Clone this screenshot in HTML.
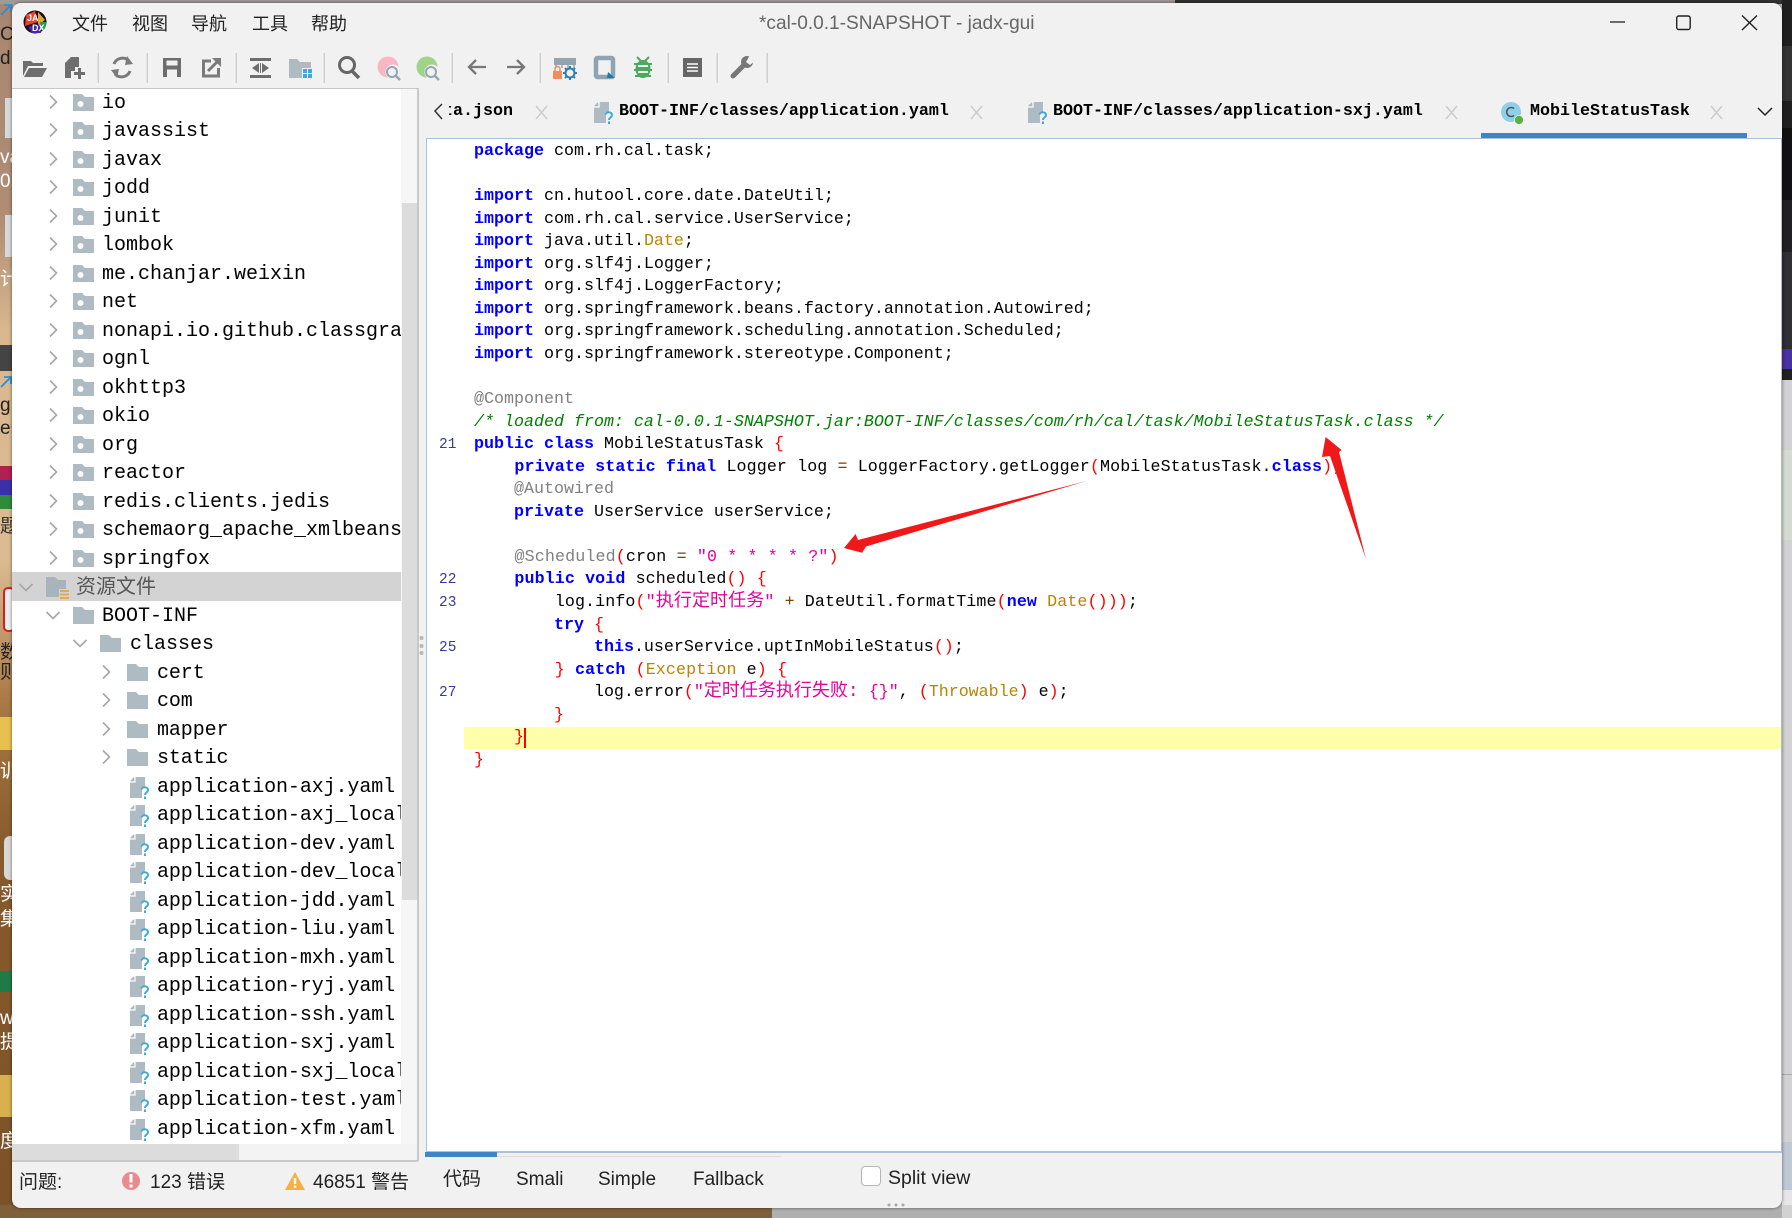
<!DOCTYPE html>
<html><head><meta charset="utf-8"><style>
*{box-sizing:border-box}
html,body{margin:0;padding:0;width:1792px;height:1218px;overflow:hidden;background:#b5b5b5}
.a{position:absolute}
#win{position:absolute;left:12px;top:3px;width:1770px;height:1205px;background:#f1f1f1;border-radius:9px;box-shadow:0 0 3px rgba(0,0,0,.55)}
.ui{font-family:"Liberation Sans","Noto Sans CJK SC",sans-serif;white-space:pre}
.m{position:absolute;top:12px;font:18px/24px "Liberation Sans","Noto Sans CJK SC",sans-serif;color:#222}
#tree{position:absolute;left:12px;top:89px;width:389px;height:1055px;background:#fff;overflow:hidden;font:20px/28.5px "Liberation Mono","Noto Sans CJK SC",monospace;color:#000}
#tree .r{position:absolute;left:0;width:389px;height:28.5px;white-space:pre}
#tree svg{position:absolute}
#tree .r>span{top:2px}
#tree span[style*="145px"]{letter-spacing:-.1px}
.tab{position:absolute;top:101px;font:bold 16.67px/22px "Liberation Mono",monospace;color:#000;white-space:pre}
#code{position:absolute;left:427px;top:139px;width:1354px;height:1012px;background:#fff;overflow:hidden;font:16.67px/22.55px "Liberation Mono","Noto Sans CJK SC",monospace;color:#000}
#code .l{position:absolute;left:47px;height:22.55px;white-space:pre;margin-top:2px}
#code .n{position:absolute;left:12px;color:#3a3a9c;font-size:14.5px;line-height:22.55px;margin-top:2px}
.w{letter-spacing:.1px}
b{color:#0000ff;font-weight:bold}
.p{color:#ff0000}.t{color:#bb8400}.s{color:#e8009c}.an{color:#808080}.o{color:#804000}
.c{color:#007f00;font-style:italic}
.z{font-size:18px;line-height:0}
.st{position:absolute;font:19px/24px "Liberation Sans","Noto Sans CJK SC",sans-serif;color:#222;white-space:pre}
.d{position:absolute;left:0;width:12px;overflow:hidden;font:19px/24px "Liberation Sans","Noto Sans CJK SC",sans-serif;white-space:pre}
</style></head><body>
<svg width="0" height="0" style="position:absolute"><defs>
<symbol id="cr" viewBox="0 0 10 16"><path d="M2 1.5 L8.5 8 L2 14.5" fill="none" stroke="#a6a6a6" stroke-width="1.6"/></symbol>
<symbol id="cd" viewBox="0 0 16 10"><path d="M1.5 2 L8 8.5 L14.5 2" fill="none" stroke="#a6a6a6" stroke-width="1.6"/></symbol>
<symbol id="pk" viewBox="0 0 21 17"><path d="M0 0H9L12 3H21V17H0Z" fill="#aebbc2"/><circle cx="7.5" cy="10" r="3" fill="#fff"/></symbol>
<symbol id="fo" viewBox="0 0 21 17"><path d="M0 0H9L12 3H21V17H0Z" fill="#aebbc2"/></symbol>
<symbol id="fi" viewBox="0 0 20 24"><path d="M5 0H15V11H12V21H0V5Z M0 4L4 0V4Z" fill="#aebbc2"/><path d="M5 0V5H0" fill="none" stroke="#fff" stroke-width="1.2"/><path d="M11.5 12.5C12 9.5 18 9.5 18 13C18 15.5 15 15.5 15 18" fill="none" stroke="#3fa9dd" stroke-width="2"/><rect x="14" y="19.5" width="2" height="2.5" fill="#3fa9dd"/></symbol>
</defs></svg>

<!-- desktop -->
<div class="a" style="left:0;top:0;width:13px;height:1218px;background:linear-gradient(#a88670 0,#b08d74 220px,#d9b78f 330px,#dcbb92 560px,#a97a45 700px,#875a2c 850px,#7b5228 1218px)"></div>
<div class="a" style="left:0;top:0;width:1175px;height:4px;background:#9f9a98"></div>
<div class="a" style="left:1175px;top:0;width:617px;height:4px;background:#333"></div>
<div class="a" style="left:0;top:1205px;width:772px;height:13px;background:#80603a"></div>
<div class="a" style="left:772px;top:1205px;width:1020px;height:13px;background:#b0b0b0"></div>
<div class="a" style="left:1782px;top:0;width:10px;height:380px;background:#202020"></div>
<div class="a" style="left:1782px;top:46px;width:10px;height:55px;background:#333"></div>
<div class="a" style="left:1782px;top:128px;width:10px;height:72px;background:#111"></div>
<div class="a" style="left:1782px;top:252px;width:10px;height:98px;background:#2e2e33"></div>
<div class="a" style="left:1782px;top:349px;width:10px;height:20px;background:#4a2fa0"></div>
<div class="a" style="left:1782px;top:380px;width:10px;height:838px;background:#d2d2d2"></div>
<div class="a" style="left:1782px;top:450px;width:10px;height:90px;background:#d5dbd3"></div>
<div class="a" style="left:1782px;top:1074px;width:10px;height:1px;background:#aaa"></div>
<div class="a" style="left:1782px;top:1142px;width:10px;height:48px;background:#c0c8d6"></div>
<div class="a" style="left:1782px;top:1190px;width:10px;height:15px;background:#e6e6e6"></div>

<svg class="a" style="left:0;top:0" width="13" height="400" viewBox="0 0 13 400"><path d="M1 15L10 6M4 5H11V12" fill="none" stroke="#2a8fd8" stroke-width="1.8"/><path d="M1 387L10 378M4 377H11V384" fill="none" stroke="#2a8fd8" stroke-width="1.8"/></svg>
<div class="d" style="top:23px;color:#222">Ch</div>
<div class="d" style="top:47px;color:#222">d</div>
<div class="a" style="left:5px;top:98px;width:7px;height:40px;background:#d5d9dc"></div>
<div class="d" style="top:146px;color:#fff">va</div>
<div class="d" style="top:170px;color:#fff">0</div>
<div class="a" style="left:5px;top:215px;width:7px;height:42px;background:#d5d9dc"></div>
<div class="d" style="top:268px;color:#fff">计</div>
<div class="a" style="left:0;top:345px;width:12px;height:26px;background:#444"></div>
<div class="d" style="top:394px;color:#222">g</div>
<div class="d" style="top:417px;color:#222">er</div>
<div class="a" style="left:0;top:466px;width:12px;height:14px;background:#b02050"></div>
<div class="a" style="left:0;top:480px;width:12px;height:15px;background:#3a30a8"></div>
<div class="a" style="left:0;top:495px;width:12px;height:14px;background:#2f8a3a"></div>
<div class="d" style="top:515px;color:#333">题</div>
<div class="a" style="left:3px;top:587px;width:12px;height:45px;border:2px solid #d02020;border-radius:5px;background:#eee"></div>
<div class="d" style="top:641px;color:#222">数</div>
<div class="d" style="top:661px;color:#222">则</div>
<div class="a" style="left:0;top:717px;width:12px;height:33px;background:#e8c050"></div>
<div class="d" style="top:760px;color:#fff">训</div>
<div class="a" style="left:4px;top:836px;width:8px;height:44px;background:#d8d8d8;border-radius:6px 0 0 6px"></div>
<div class="d" style="top:883px;color:#fff">实</div>
<div class="d" style="top:908px;color:#fff">集</div>
<div class="a" style="left:0;top:971px;width:12px;height:21px;background:#1f7a45"></div>
<div class="d" style="top:1007px;color:#fff">w</div>
<div class="d" style="top:1031px;color:#fff">提</div>
<div class="a" style="left:0;top:1075px;width:12px;height:42px;background:#d8b050"></div>
<div class="d" style="top:1130px;color:#fff">度</div>

<div id="win"></div>

<!-- menu + title -->
<div class="m" style="left:72px">文件</div>
<div class="m" style="left:132px">视图</div>
<div class="m" style="left:191px">导航</div>
<div class="m" style="left:252px">工具</div>
<div class="m" style="left:311px">帮助</div>
<div class="a ui" style="left:759px;top:12px;font-size:19.1px;line-height:24px;color:#666">*cal-0.0.1-SNAPSHOT - jadx-gui</div>

<!-- tree panel chrome -->
<div class="a" style="left:12px;top:88px;width:406px;height:1px;background:#c8c8c8"></div>
<div class="a" style="left:401px;top:89px;width:16px;height:1055px;background:#f6f6f6"></div>
<div class="a" style="left:402px;top:203px;width:15px;height:697px;background:#dcdcdc"></div>
<div class="a" style="left:417px;top:88px;width:1.5px;height:1073px;background:#c8c8c8"></div>
<div class="a" style="left:12px;top:1144px;width:405px;height:16px;background:#f3f3f3"></div>
<div class="a" style="left:12px;top:1144px;width:227px;height:16px;background:#dcdcdc"></div>
<div class="a" style="left:12px;top:1160px;width:406px;height:1.5px;background:#c8c8c8"></div>

<div id="tree">
<div class="r" style="top:-1.25px"><svg style="left:36px;top:6px" width="10" height="16"><use href="#cr"/></svg><svg style="left:61px;top:6px" width="21" height="17"><use href="#pk"/></svg><span class="a" style="left:90px">io</span></div>
<div class="r" style="top:27.25px"><svg style="left:36px;top:6px" width="10" height="16"><use href="#cr"/></svg><svg style="left:61px;top:6px" width="21" height="17"><use href="#pk"/></svg><span class="a" style="left:90px">javassist</span></div>
<div class="r" style="top:55.75px"><svg style="left:36px;top:6px" width="10" height="16"><use href="#cr"/></svg><svg style="left:61px;top:6px" width="21" height="17"><use href="#pk"/></svg><span class="a" style="left:90px">javax</span></div>
<div class="r" style="top:84.25px"><svg style="left:36px;top:6px" width="10" height="16"><use href="#cr"/></svg><svg style="left:61px;top:6px" width="21" height="17"><use href="#pk"/></svg><span class="a" style="left:90px">jodd</span></div>
<div class="r" style="top:112.75px"><svg style="left:36px;top:6px" width="10" height="16"><use href="#cr"/></svg><svg style="left:61px;top:6px" width="21" height="17"><use href="#pk"/></svg><span class="a" style="left:90px">junit</span></div>
<div class="r" style="top:141.25px"><svg style="left:36px;top:6px" width="10" height="16"><use href="#cr"/></svg><svg style="left:61px;top:6px" width="21" height="17"><use href="#pk"/></svg><span class="a" style="left:90px">lombok</span></div>
<div class="r" style="top:169.75px"><svg style="left:36px;top:6px" width="10" height="16"><use href="#cr"/></svg><svg style="left:61px;top:6px" width="21" height="17"><use href="#pk"/></svg><span class="a" style="left:90px">me.chanjar.weixin</span></div>
<div class="r" style="top:198.25px"><svg style="left:36px;top:6px" width="10" height="16"><use href="#cr"/></svg><svg style="left:61px;top:6px" width="21" height="17"><use href="#pk"/></svg><span class="a" style="left:90px">net</span></div>
<div class="r" style="top:226.75px"><svg style="left:36px;top:6px" width="10" height="16"><use href="#cr"/></svg><svg style="left:61px;top:6px" width="21" height="17"><use href="#pk"/></svg><span class="a" style="left:90px">nonapi.io.github.classgraph</span></div>
<div class="r" style="top:255.25px"><svg style="left:36px;top:6px" width="10" height="16"><use href="#cr"/></svg><svg style="left:61px;top:6px" width="21" height="17"><use href="#pk"/></svg><span class="a" style="left:90px">ognl</span></div>
<div class="r" style="top:283.75px"><svg style="left:36px;top:6px" width="10" height="16"><use href="#cr"/></svg><svg style="left:61px;top:6px" width="21" height="17"><use href="#pk"/></svg><span class="a" style="left:90px">okhttp3</span></div>
<div class="r" style="top:312.25px"><svg style="left:36px;top:6px" width="10" height="16"><use href="#cr"/></svg><svg style="left:61px;top:6px" width="21" height="17"><use href="#pk"/></svg><span class="a" style="left:90px">okio</span></div>
<div class="r" style="top:340.75px"><svg style="left:36px;top:6px" width="10" height="16"><use href="#cr"/></svg><svg style="left:61px;top:6px" width="21" height="17"><use href="#pk"/></svg><span class="a" style="left:90px">org</span></div>
<div class="r" style="top:369.25px"><svg style="left:36px;top:6px" width="10" height="16"><use href="#cr"/></svg><svg style="left:61px;top:6px" width="21" height="17"><use href="#pk"/></svg><span class="a" style="left:90px">reactor</span></div>
<div class="r" style="top:397.75px"><svg style="left:36px;top:6px" width="10" height="16"><use href="#cr"/></svg><svg style="left:61px;top:6px" width="21" height="17"><use href="#pk"/></svg><span class="a" style="left:90px">redis.clients.jedis</span></div>
<div class="r" style="top:426.25px"><svg style="left:36px;top:6px" width="10" height="16"><use href="#cr"/></svg><svg style="left:61px;top:6px" width="21" height="17"><use href="#pk"/></svg><span class="a" style="left:90px">schemaorg_apache_xmlbeans</span></div>
<div class="r" style="top:454.75px"><svg style="left:36px;top:6px" width="10" height="16"><use href="#cr"/></svg><svg style="left:61px;top:6px" width="21" height="17"><use href="#pk"/></svg><span class="a" style="left:90px">springfox</span></div>
<div class="r" style="top:483.25px;height:29px;background:#d3d3d3"><svg style="left:6px;top:10px" width="16" height="10"><use href="#cd"/></svg><svg style="left:34px;top:5px" width="23" height="22" viewBox="0 0 23 22"><path d="M0 0H9L12 3H20V12H13V20H0Z" fill="#a7b4bc"/><rect x="14" y="13" width="9" height="2" fill="#e8a850"/><rect x="14" y="16.5" width="9" height="2" fill="#e8a850"/><rect x="14" y="20" width="9" height="2" fill="#e8a850"/></svg><span class="a" style="left:64px;color:#555;top:3px">资源文件</span></div>
<div class="r" style="top:511.75px"><svg style="left:33px;top:9px" width="16" height="10"><use href="#cd"/></svg><svg style="left:61px;top:6px" width="21" height="17"><use href="#fo"/></svg><span class="a" style="left:90px">BOOT-INF</span></div>
<div class="r" style="top:540.25px"><svg style="left:60px;top:9px" width="16" height="10"><use href="#cd"/></svg><svg style="left:88px;top:6px" width="21" height="17"><use href="#fo"/></svg><span class="a" style="left:118px">classes</span></div>
<div class="r" style="top:568.75px"><svg style="left:89px;top:6px" width="10" height="16"><use href="#cr"/></svg><svg style="left:115px;top:6px" width="21" height="17"><use href="#fo"/></svg><span class="a" style="left:145px">cert</span></div>
<div class="r" style="top:597.25px"><svg style="left:89px;top:6px" width="10" height="16"><use href="#cr"/></svg><svg style="left:115px;top:6px" width="21" height="17"><use href="#fo"/></svg><span class="a" style="left:145px">com</span></div>
<div class="r" style="top:625.75px"><svg style="left:89px;top:6px" width="10" height="16"><use href="#cr"/></svg><svg style="left:115px;top:6px" width="21" height="17"><use href="#fo"/></svg><span class="a" style="left:145px">mapper</span></div>
<div class="r" style="top:654.25px"><svg style="left:89px;top:6px" width="10" height="16"><use href="#cr"/></svg><svg style="left:115px;top:6px" width="21" height="17"><use href="#fo"/></svg><span class="a" style="left:145px">static</span></div>
<div class="r" style="top:682.75px"><svg style="left:118px;top:5px" width="20" height="24"><use href="#fi"/></svg><span class="a" style="left:145px">application-axj.yaml</span></div>
<div class="r" style="top:711.25px"><svg style="left:118px;top:5px" width="20" height="24"><use href="#fi"/></svg><span class="a" style="left:145px">application-axj_local.yaml</span></div>
<div class="r" style="top:739.75px"><svg style="left:118px;top:5px" width="20" height="24"><use href="#fi"/></svg><span class="a" style="left:145px">application-dev.yaml</span></div>
<div class="r" style="top:768.25px"><svg style="left:118px;top:5px" width="20" height="24"><use href="#fi"/></svg><span class="a" style="left:145px">application-dev_local.yaml</span></div>
<div class="r" style="top:796.75px"><svg style="left:118px;top:5px" width="20" height="24"><use href="#fi"/></svg><span class="a" style="left:145px">application-jdd.yaml</span></div>
<div class="r" style="top:825.25px"><svg style="left:118px;top:5px" width="20" height="24"><use href="#fi"/></svg><span class="a" style="left:145px">application-liu.yaml</span></div>
<div class="r" style="top:853.75px"><svg style="left:118px;top:5px" width="20" height="24"><use href="#fi"/></svg><span class="a" style="left:145px">application-mxh.yaml</span></div>
<div class="r" style="top:882.25px"><svg style="left:118px;top:5px" width="20" height="24"><use href="#fi"/></svg><span class="a" style="left:145px">application-ryj.yaml</span></div>
<div class="r" style="top:910.75px"><svg style="left:118px;top:5px" width="20" height="24"><use href="#fi"/></svg><span class="a" style="left:145px">application-ssh.yaml</span></div>
<div class="r" style="top:939.25px"><svg style="left:118px;top:5px" width="20" height="24"><use href="#fi"/></svg><span class="a" style="left:145px">application-sxj.yaml</span></div>
<div class="r" style="top:967.75px"><svg style="left:118px;top:5px" width="20" height="24"><use href="#fi"/></svg><span class="a" style="left:145px">application-sxj_local.yaml</span></div>
<div class="r" style="top:996.25px"><svg style="left:118px;top:5px" width="20" height="24"><use href="#fi"/></svg><span class="a" style="left:145px">application-test.yaml</span></div>
<div class="r" style="top:1024.75px"><svg style="left:118px;top:5px" width="20" height="24"><use href="#fi"/></svg><span class="a" style="left:145px">application-xfm.yaml</span></div>
</div>

<!-- tabs -->
<div class="tab" style="left:449px;width:64px;overflow:hidden"><span style="margin-left:-6px;display:inline-block">ta.json</span></div>
<div class="tab" style="left:619px">BOOT-INF/classes/application.yaml</div>
<div class="tab" style="left:1053px">BOOT-INF/classes/application-sxj.yaml</div>
<div class="tab" style="left:1530px">MobileStatusTask</div>
<div class="a" style="left:1481px;top:133px;width:266px;height:5px;background:#3d85c6"></div>

<!-- editor -->
<div class="a" style="left:425.5px;top:137.5px;width:1356.5px;height:1.5px;background:#a9c1de"></div>
<div class="a" style="left:425.5px;top:137.5px;width:1.5px;height:1014px;background:#a9c1de"></div>
<div class="a" style="left:425.5px;top:1151px;width:1356.5px;height:1.5px;background:#a9c1de"></div>
<div class="a" style="left:1780.5px;top:137.5px;width:1.5px;height:1014px;background:#b5bcc6"></div>
<div id="code">
<div class="a" style="left:37px;top:588px;width:1317px;height:22px;background:#ffffaa"></div>
<div class="a" style="left:97px;top:589px;width:2px;height:20px;background:#ff0000"></div>
<div class="l" style="top:0"><b>package</b> com.rh.cal.task;</div>
<div class="l" style="top:45.1px"><b>import</b> cn.hutool.core.date.DateUtil;</div>
<div class="l" style="top:67.65px"><b>import</b> com.rh.cal.service.UserService;</div>
<div class="l" style="top:90.2px"><b>import</b> java.util.<span class="t">Date</span>;</div>
<div class="l" style="top:112.75px"><b>import</b> org.slf4j.Logger;</div>
<div class="l" style="top:135.3px"><b>import</b> org.slf4j.LoggerFactory;</div>
<div class="l" style="top:157.85px"><b>import</b> org.springframework.beans.factory.annotation.Autowired;</div>
<div class="l" style="top:180.4px"><b>import</b> org.springframework.scheduling.annotation.Scheduled;</div>
<div class="l" style="top:202.95px"><b>import</b> org.springframework.stereotype.Component;</div>
<div class="l an" style="top:248.05px">@Component</div>
<div class="l c" style="top:270.6px">/* loaded from: cal-0.0.1-SNAPSHOT.jar:BOOT-INF/classes/com/rh/cal/task/MobileStatusTask.class */</div>
<div class="n" style="top:293.15px">21</div>
<div class="l" style="top:293.15px"><b>public</b> <b>class</b> MobileStatusTask <span class="p">{</span></div>
<div class="l w" style="top:315.7px">    <b>private</b> <b>static</b> <b>final</b> Logger log <span class="o">=</span> LoggerFactory.getLogger<span class="p">(</span>MobileStatusTask.<b>class</b><span class="p">)</span>;</div>
<div class="l an" style="top:338.25px">    @Autowired</div>
<div class="l" style="top:360.8px">    <b>private</b> UserService userService;</div>
<div class="l" style="top:405.9px;letter-spacing:.13px">    <span class="an">@Scheduled</span><span class="p">(</span>cron <span class="o">=</span> <span class="s">"0 * * * * ?"</span><span class="p">)</span></div>
<div class="n" style="top:428.45px">22</div>
<div class="l w" style="top:428.45px">    <b>public</b> <b>void</b> scheduled<span class="p">()</span> <span class="p">{</span></div>
<div class="n" style="top:451px">23</div>
<div class="l w" style="top:451px">        log.info<span class="p">(</span><span class="s">"<span class="z">执行定时任务</span>"</span> <span class="o">+</span> DateUtil.formatTime<span class="p">(</span><b>new</b> <span class="t">Date</span><span class="p">()))</span>;</div>
<div class="l" style="top:473.55px">        <b>try</b> <span class="p">{</span></div>
<div class="n" style="top:496.1px">25</div>
<div class="l" style="top:496.1px">            <b>this</b>.userService.uptInMobileStatus<span class="p">()</span>;</div>
<div class="l w" style="top:518.65px">        <span class="p">}</span> <b>catch</b> <span class="p">(</span><span class="t">Exception</span> e<span class="p">)</span> <span class="p">{</span></div>
<div class="n" style="top:541.2px">27</div>
<div class="l" style="top:541.2px">            log.error<span class="p">(</span><span class="s">"<span class="z">定时任务执行失败:</span> {}"</span>, <span class="p">(</span><span class="t">Throwable</span><span class="p">)</span> e<span class="p">)</span>;</div>
<div class="l" style="top:563.75px">        <span class="p">}</span></div>
<div class="l" style="top:586.3px">    <span class="p">}</span></div>
<div class="l" style="top:608.85px"><span class="p">}</span></div>
</div>

<!-- bottom -->
<div class="a" style="left:425px;top:1152px;width:72px;height:5px;background:#3d85c6"></div>
<div class="a" style="left:497px;top:1156px;width:284px;height:1px;background:#ddd"></div>
<div class="st" style="left:19px;top:1171px">问题:</div>
<div class="st" style="left:150px;top:1171px">123 错误</div>
<div class="st" style="left:313px;top:1171px">46851 警告</div>
<div class="st" style="left:443px;top:1168px">代码</div>
<div class="st" style="left:516px;top:1168px">Smali</div>
<div class="st" style="left:598px;top:1168px">Simple</div>
<div class="st" style="left:693px;top:1168px">Fallback</div>
<div class="a" style="left:861px;top:1166px;width:20px;height:20px;background:#fff;border:1.5px solid #b5b5b5;border-radius:4px"></div>
<div class="st" style="left:888px;top:1166px;font-size:19.5px">Split view</div>

<svg class="a" style="left:0;top:0;pointer-events:none" width="1792" height="1218" viewBox="0 0 1792 1218">
<!-- logo -->
<circle cx="35" cy="22" r="11.5" fill="#111"/>
<path d="M26 15 L35 11 L38 22 L25 26Z" fill="#e8402a"/>
<path d="M38 12 L45 20 L38 25Z" fill="#f0a030"/>
<path d="M28 27 L40 24 L41 33 L32 33Z" fill="#5020b0"/>
<path d="M40 22 L47 22 L44 30 L40 30Z" fill="#2a9a50"/>
<text x="27" y="21" font-family="Liberation Sans" font-weight="bold" font-size="9" fill="#fff">JA</text>
<text x="32" y="31" font-family="Liberation Sans" font-weight="bold" font-size="9" fill="#fff">DX</text>
<!-- separators -->
<g fill="#cfcfcf">
<rect x="97.5" y="53" width="1.5" height="30"/><rect x="146.5" y="53" width="1.5" height="30"/><rect x="235.5" y="53" width="1.5" height="30"/><rect x="323.5" y="53" width="1.5" height="30"/><rect x="451.5" y="53" width="1.5" height="30"/><rect x="539.5" y="53" width="1.5" height="30"/><rect x="667.5" y="53" width="1.5" height="30"/><rect x="716.5" y="53" width="1.5" height="30"/><rect x="766.5" y="53" width="1.5" height="30"/>
</g>
<!-- open -->
<path d="M23 77V61H31L33 63H43V66H28L23 76Z" fill="#6e6e6e"/><path d="M29 68H47L42 77H24Z" fill="#6e6e6e"/>
<!-- new project -->
<path d="M71 57H79V67H75V71H71V78H65V63Z" fill="#6e6e6e"/><rect x="74" y="72" width="11" height="3" fill="#6e6e6e"/><rect x="78" y="68" width="3" height="11" fill="#6e6e6e"/>
<!-- refresh -->
<g fill="none" stroke="#7a7a7a" stroke-width="3"><path d="M114 64A9 9 0 0 1 129 61"/><path d="M130 71A9 9 0 0 1 115 74"/></g>
<path d="M127 56L133 64L125 65Z M117 78L111 70L119 69Z" fill="#7a7a7a"/>
<!-- save -->
<path d="M163 58H181V77H163Z M166.5 60.5V65.5H177.5V60.5Z M167 69.5V77H177V69.5Z" fill="#6e6e6e" fill-rule="evenodd"/>
<!-- export -->
<path d="M211 61H203.5V76H218.5V68" fill="none" stroke="#7a7a7a" stroke-width="3"/><path d="M208 71L218 61" stroke="#7a7a7a" stroke-width="3"/><path d="M212 58H221V67Z" fill="#7a7a7a"/>
<!-- expand -->
<rect x="250" y="58" width="21" height="3" fill="#6e6e6e"/><rect x="250" y="75" width="21" height="3" fill="#6e6e6e"/><path d="M259 63V73L252 68Z M262 63V73L269 68Z" fill="#6e6e6e"/><rect x="260" y="63" width="1" height="10" fill="#6e6e6e"/>
<!-- folder win -->
<path d="M289 59H297L300 62H311V68H302V78H289Z" fill="#aebbc2"/><g fill="#3fa9dd"><rect x="303" y="69" width="4" height="4"/><rect x="308" y="69" width="4" height="4"/><rect x="303" y="74" width="4" height="4"/><rect x="308" y="74" width="4" height="4"/></g>
<!-- search -->
<circle cx="347" cy="65" r="7.5" fill="none" stroke="#666" stroke-width="3"/><path d="M352 71L359 78" stroke="#666" stroke-width="3.5"/>
<!-- pink/green -->
<circle cx="388" cy="67" r="10.5" fill="#f9b6c4"/><circle cx="393" cy="72" r="7.5" fill="#f1f1f1"/><circle cx="392" cy="72" r="5" fill="none" stroke="#93a6b2" stroke-width="2"/><path d="M396 76L400 80" stroke="#93a6b2" stroke-width="2.5"/>
<circle cx="427" cy="67" r="10.5" fill="#a0d28a"/><circle cx="432" cy="72" r="7.5" fill="#f1f1f1"/><circle cx="431" cy="72" r="5" fill="none" stroke="#93a6b2" stroke-width="2"/><path d="M435 76L439 80" stroke="#93a6b2" stroke-width="2.5"/>
<!-- arrows -->
<path d="M486 67H469M476 60L469 67L476 74" fill="none" stroke="#777" stroke-width="2.3"/>
<path d="M507 67H524M517 60L524 67L517 74" fill="none" stroke="#777" stroke-width="2.3"/>
<!-- lock gear -->
<rect x="554" y="58" width="22" height="7" fill="#93a4b0"/><path d="M556 65V68M562 65V68M568 65V68M574 65V68" stroke="#93a4b0" stroke-width="1.5"/>
<rect x="553" y="71" width="9" height="8" fill="#f28c5a"/><path d="M555 71V69A2.5 2.5 0 0 1 560 69V71" fill="none" stroke="#f28c5a" stroke-width="1.6"/>
<circle cx="570" cy="73" r="4.5" fill="none" stroke="#2d7fb0" stroke-width="2"/><path d="M570 66V68M570 78V80M563 73H565M575 73H577M565 68L566.5 69.5M575 78L573.5 76.5M575 68L573.5 69.5M565 78L566.5 76.5" stroke="#2d7fb0" stroke-width="2"/>
<!-- device -->
<rect x="596" y="58" width="17" height="19" fill="#f1f1f1" stroke="#8fa3b3" stroke-width="4.5" rx="1.5"/><path d="M608 72L615 78H607Z" fill="#1f78ab"/>
<!-- bug -->
<g fill="#4fa860"><ellipse cx="643" cy="69" rx="7.5" ry="9"/><path d="M637 57L641 61M649 57L645 61" stroke="#4fa860" stroke-width="2"/><path d="M634 64H652M634 70H652M635 76H651" stroke="#4fa860" stroke-width="2"/></g><path d="M638 66H648M638 72H648" stroke="#f1f1f1" stroke-width="2"/>
<!-- note -->
<rect x="683" y="58" width="19" height="19" fill="#666"/><path d="M687 64H698M687 67.5H698M687 71H698" stroke="#fff" stroke-width="1.6"/>
<!-- wrench -->
<path d="M733 76L746 63" stroke="#777" stroke-width="5" stroke-linecap="round"/><circle cx="747" cy="62" r="6" fill="#777"/><path d="M746 62L750 55H756V60L750 65Z" fill="#f1f1f1"/>
<!-- window controls -->
<path d="M1610 22H1625" stroke="#222" stroke-width="1.3"/>
<rect x="1676.7" y="16" width="13.5" height="13.5" rx="2" fill="none" stroke="#222" stroke-width="1.4"/>
<path d="M1742 15.5L1757 30M1757 15.5L1742 30" stroke="#222" stroke-width="1.4"/>
<!-- tab icons -->
<path d="M442 104L435 111L442 119" fill="none" stroke="#333" stroke-width="1.5"/>
<path d="M536 106L547 119M547 106L536 119" stroke="#ccc" stroke-width="1.5"/>
<path d="M971 106L982 119M982 106L971 119" stroke="#ccc" stroke-width="1.5"/>
<path d="M1446 106L1457 119M1457 106L1446 119" stroke="#ccc" stroke-width="1.5"/>
<path d="M1711 106L1722 119M1722 106L1711 119" stroke="#ccc" stroke-width="1.5"/>
<path d="M1758 108L1765 115L1772 108" fill="none" stroke="#222" stroke-width="1.5"/>
<use href="#fi" x="594" y="102" width="20" height="24"/>
<use href="#fi" x="1028" y="102" width="20" height="24"/>
<circle cx="1511" cy="112" r="10" fill="#8ecfe9"/>
<path d="M1514 108.5A4.5 4.5 0 1 0 1514 115.5" fill="none" stroke="#555" stroke-width="1.6"/>
<circle cx="1519" cy="120" r="4.5" fill="#5cb03c" stroke="#fff" stroke-width=".6"/>
<!-- red arrows -->
<path d="M844 548L855.6 534L858 540L1086.5 481L866 546.5L862 552.7Z" fill="#f01818"/>
<path d="M1325.6 437L1341.5 450L1339 452L1366 559L1330 456L1322 457Z" fill="#f01818"/>
<!-- splitter dots and status icons -->
<g fill="#b8b8b8"><circle cx="421.5" cy="638" r="2"/><circle cx="421.5" cy="646" r="2"/><circle cx="421.5" cy="653" r="2"/></g>
<g fill="#aaa"><circle cx="889" cy="1205" r="1.5"/><circle cx="896" cy="1205" r="1.5"/><circle cx="903" cy="1205" r="1.5"/></g>
<circle cx="131" cy="1181" r="9" fill="#e88a8f"/><rect x="129.5" y="1174" width="3" height="8.5" fill="#fff"/><rect x="129.5" y="1184.5" width="3" height="3" fill="#fff"/>
<path d="M295 1172L305 1190H285Z" fill="#f5b041"/><rect x="293.8" y="1178" width="2.4" height="6" fill="#fff"/><rect x="293.8" y="1185.5" width="2.4" height="2.4" fill="#fff"/>
</svg>
</body></html>
